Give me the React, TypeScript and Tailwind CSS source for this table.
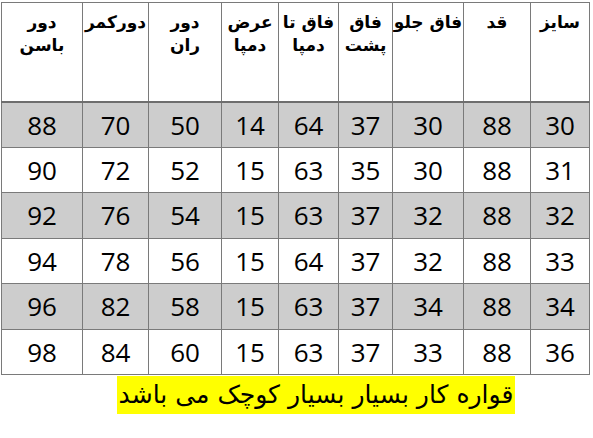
const headers = [
  ["سایز"],
  ["قد"],
  ["فاق جلو"],
  ["فاق", "پشت"],
  ["فاق تا", "دمپا"],
  ["عرض", "دمپا"],
  ["دور", "ران"],
  ["دورکمر"],
  ["دور", "باسن"],
];

// widths right -> left
const widths = [59, 67, 71, 54, 60, 57, 73, 66, 81];

const rows = [
  [30, 88, 30, 37, 64, 14, 50, 70, 88],
  [31, 88, 30, 35, 63, 15, 52, 72, 90],
  [32, 88, 32, 37, 63, 15, 54, 76, 92],
  [33, 88, 32, 37, 64, 15, 56, 78, 94],
  [34, 88, 34, 37, 63, 15, 58, 82, 96],
  [36, 88, 33, 37, 63, 15, 60, 84, 98],
];

export default function App() {
  return (
    <div className="w-[593px] h-[438px] bg-white pt-[2px] pl-[1px]">
      <table
        dir="rtl"
        className="table-fixed border-collapse w-[589px] border border-[#7a7a7a]"
      >
        <colgroup>
          {widths.map((w, i) => (
            <col key={i} style={{ width: w }} />
          ))}
        </colgroup>
        <thead>
          <tr className="h-[99px] border-b-2 border-[#6e6e6e]">
            {headers.map((h, i) => (
              <th
                key={i}
                className="border border-[#7a7a7a] align-top pt-[8px] text-center font-bold text-[17px] leading-[23px] text-black font-['DejaVu_Sans',sans-serif]"
              >
                {h.map((line, j) => (
                  <div key={j}>{line}</div>
                ))}
              </th>
            ))}
          </tr>
        </thead>
        <tbody>
          {rows.map((r, i) => (
            <tr
              key={i}
              className={`h-[45.5px] ${i % 2 === 0 ? "bg-[#cdcdcd]" : "bg-white"}`}
            >
              {r.map((v, j) => (
                <td
                  key={j}
                  className="border border-[#7a7a7a] text-center align-middle text-[26px] leading-none text-black font-['Open_Sans',sans-serif]"
                >
                  {v}
                </td>
              ))}
            </tr>
          ))}
        </tbody>
      </table>
      <div className="flex justify-center pl-[38px] pt-[1px]">
        <div
          dir="rtl"
          className="bg-[#ffff00] h-[38px] px-[2px] flex items-center text-[25px] text-black font-['DejaVu_Sans',sans-serif]"
        >
          قواره کار بسیار بسیار کوچک می باشد
        </div>
      </div>
    </div>
  );
}
